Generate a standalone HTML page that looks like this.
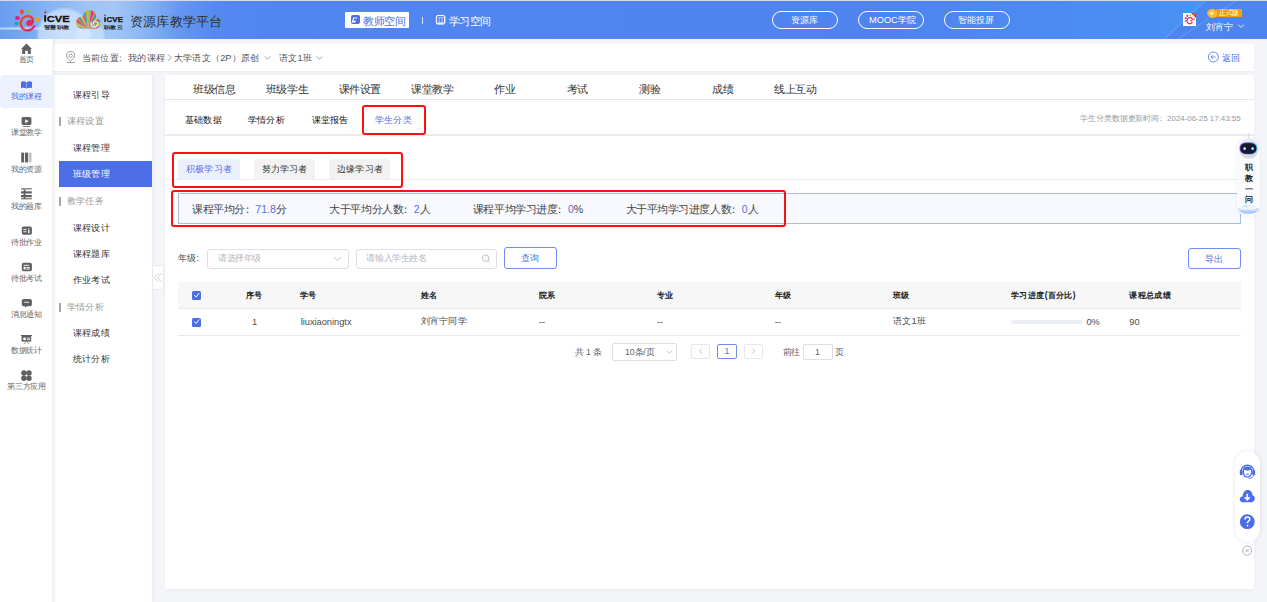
<!DOCTYPE html>
<html><head><meta charset="utf-8">
<style>
*{margin:0;padding:0;box-sizing:border-box}
html,body{width:1267px;height:602px;overflow:hidden}
body{position:relative;background:#f3f5f9;font-family:"Liberation Sans",sans-serif;color:#333}
.a{position:absolute;white-space:nowrap}
.t{position:absolute;white-space:nowrap;line-height:1}
/* header */
#hdr{left:0;top:0;width:1267px;height:39px;overflow:hidden;background:
radial-gradient(circle 28px at 64px 35px, rgba(225,238,253,.72) 0, rgba(225,238,253,.6) 88%, rgba(225,238,253,0) 100%),
radial-gradient(circle 16px at 90px 36px, rgba(222,236,253,.6) 0, rgba(222,236,253,.5) 80%, rgba(222,236,253,0) 100%),
radial-gradient(ellipse 55px 2px at 18px 28.5px, rgba(235,245,255,.75), rgba(235,245,255,0) 100%),
linear-gradient(90deg,#6a9cf0 0,#7dadf3 35px,#9fc4f6 90px,#a2c6f6 115px,#8cb8f4 140px,#7eadf3 155px,#6497f1 180px,#5589f0 215px,#5185f0 260px,#4f84ef 900px,#4d85ee 1267px)}
#topline{left:0;top:0;width:1267px;height:1px;background:#dcd8ea}
#nav{left:0;top:39px;width:53px;height:563px;background:#fff}
#crumb{left:53px;top:44px;width:1201px;height:27px;background:#fff;box-shadow:0 1px 2px rgba(0,0,0,.04)}
#side{left:53px;top:75px;width:99px;height:527px;background:#fff;box-shadow:1px 0 3px rgba(0,0,0,.05)}
#card{left:165px;top:75px;width:1089px;height:514px;background:#fff;box-shadow:0 1px 3px rgba(0,0,0,.06)}
.nl{font-size:7.92px;color:#666;left:0;width:53px;text-align:center;letter-spacing:-0.08px}
.si{font-size:9.24px;color:#333;left:73px;letter-spacing:0.24px}
.sg{font-size:9.24px;color:#999;left:67px;letter-spacing:0.24px}
.c{display:inline-block;width:1em;letter-spacing:0;text-indent:-0.28em;overflow:visible}
.L{letter-spacing:0}
.bar{position:absolute;left:59.3px;width:1.7px;height:9px;background:#a5a5a5}
.tab1{font-size:10.56px;color:#333;letter-spacing:-0.44px}
.tab2{font-size:9.24px;color:#111;font-weight:500;letter-spacing:0.24px}
.th{font-size:8.4px;color:#222;font-weight:bold;letter-spacing:0.4px}
.td{font-size:9.24px;color:#4a4a4a;letter-spacing:0.24px}
</style></head><body>
<div id="hdr" class="a"></div>

<svg class="a" style="left:0;top:0" width="1267" height="39" viewBox="0 0 1267 39">
<defs>
<clipPath id="shellclip">
<circle cx="82.3" cy="22.6" r="6.2"/><circle cx="89.6" cy="16.6" r="6.6"/><circle cx="95.9" cy="23.3" r="4.9"/><rect x="78" y="19" width="21" height="9.8" rx="4"/>
</clipPath>
<linearGradient id="eg" x1="0" y1="0" x2="1" y2="1"><stop offset="0" stop-color="#f04a1e"/><stop offset="1" stop-color="#e0206a"/></linearGradient>
</defs>
<!-- diagonal light stripes right -->
<linearGradient id="lg1" x1="0" y1="0" x2="1" y2="0"><stop offset="0" stop-color="rgb(70,155,248)" stop-opacity="0"/><stop offset="1" stop-color="rgb(70,155,248)" stop-opacity=".6"/></linearGradient><path d="M900,1 L1205.3,1 L1165,39 L900,39Z" fill="url(#lg1)"/>
<path d="M1204.5,1 L1206.5,1 L1165.6,39 L1163.6,39Z" fill="rgba(120,190,255,.35)"/>
<path d="M1235,1 L1236.5,1 L1178.5,39 L1177,39Z" fill="rgba(110,190,255,.55)"/>

<!-- flower logo -->
<ellipse cx="21.9" cy="11.8" rx="2" ry="2.5" fill="#f0493a" transform="rotate(-20 21.9 11.8)"/>
<ellipse cx="28.6" cy="11.3" rx="2" ry="2.1" fill="#8cc43c"/>
<ellipse cx="17.4" cy="17.9" rx="2.4" ry="1.9" fill="#e5188a"/>
<ellipse cx="16.6" cy="23.6" rx="2" ry="1.8" fill="#1aaa8c"/>
<ellipse cx="37.4" cy="19.3" rx="2.3" ry="2.3" fill="#f39c12"/>
<path d="M34.2,26.2 C32.5,29.8 28.5,31.2 25,30 C21.2,28.6 19.8,24 21.4,20.2 C23,16.6 27.6,15 31,17 C33.8,18.8 33.6,22.6 31.4,24.4" fill="none" stroke="url(#eg)" stroke-width="2.3" stroke-linecap="round"/><path d="M26.2,24.2 C25.6,21.6 28.2,19.2 30.8,19.8 C33.4,20.6 33.2,24 31,25.2 C29.2,26.2 26.8,25.8 26.2,24.2Z" fill="#e5285e"/>
<!-- iCVE 1 -->
<path d="M45.9,10.8 C46.9,11.4 46.6,13.2 45.2,13.6 C44.4,13.8 44,13.2 44.3,12.5 C44.6,11.8 45.2,11.2 45.9,10.8Z" fill="#e8282a"/><rect x="44.2" y="15.2" width="1.9" height="6.6" fill="#111"/><text x="46.8" y="21.8" font-family="Liberation Sans" font-weight="bold" font-size="9.2" fill="#111" stroke="#111" stroke-width="0.3" textLength="23" lengthAdjust="spacingAndGlyphs">CVE</text>
<text x="44" y="0" transform="translate(0,28.9) scale(1,0.75)" font-size="6.4" font-weight="bold" fill="#1a1a1a" textLength="26" lengthAdjust="spacingAndGlyphs">智慧职教</text>
<!-- shell logo -->
<g clip-path="url(#shellclip)"><path d="M88.5,29.5L66.50,29.50L66.72,26.37Z" fill="#f0437a"/>
<path d="M88.5,29.5L66.72,26.37L67.39,23.30Z" fill="#2bb3a0"/>
<path d="M88.5,29.5L67.39,23.30L68.49,20.36Z" fill="#f5a623"/>
<path d="M88.5,29.5L68.49,20.36L69.99,17.61Z" fill="#8cc63f"/>
<path d="M88.5,29.5L69.99,17.61L71.87,15.09Z" fill="#e8308a"/>
<path d="M88.5,29.5L71.87,15.09L74.09,12.87Z" fill="#f26b3a"/>
<path d="M88.5,29.5L74.09,12.87L76.61,10.99Z" fill="#19a7a0"/>
<path d="M88.5,29.5L76.61,10.99L79.36,9.49Z" fill="#f7b731"/>
<path d="M88.5,29.5L79.36,9.49L82.30,8.39Z" fill="#f0437a"/>
<path d="M88.5,29.5L82.30,8.39L85.37,7.72Z" fill="#2bb3a0"/>
<path d="M88.5,29.5L85.37,7.72L88.50,7.50Z" fill="#f5a623"/>
<path d="M88.5,29.5L88.50,7.50L91.63,7.72Z" fill="#8cc63f"/>
<path d="M88.5,29.5L91.63,7.72L94.70,8.39Z" fill="#e8308a"/>
<path d="M88.5,29.5L94.70,8.39L97.64,9.49Z" fill="#f26b3a"/>
<path d="M88.5,29.5L97.64,9.49L100.39,10.99Z" fill="#19a7a0"/>
<path d="M88.5,29.5L100.39,10.99L102.91,12.87Z" fill="#f7b731"/>
<path d="M88.5,29.5L102.91,12.87L105.13,15.09Z" fill="#f0437a"/>
<path d="M88.5,29.5L105.13,15.09L107.01,17.61Z" fill="#2bb3a0"/>
<path d="M88.5,29.5L107.01,17.61L108.51,20.36Z" fill="#f5a623"/>
<path d="M88.5,29.5L108.51,20.36L109.61,23.30Z" fill="#8cc63f"/>
<path d="M88.5,29.5L109.61,23.30L110.28,26.37Z" fill="#e8308a"/>
<path d="M88.5,29.5L110.28,26.37L110.50,29.50Z" fill="#f26b3a"/></g>
<path d="M93.8,24.8 C92.6,22.6 94.8,20.6 96.8,21.8 C98.8,23.2 97.8,26.6 95.2,27 C92.2,27.4 90.2,24.6 91.2,21.6" fill="none" stroke="rgba(235,245,255,.9)" stroke-width="1.3"/>
<!-- iCVE 2 -->
<circle cx="105" cy="15.4" r="0.95" fill="#e8282a"/><rect x="104.3" y="17.2" width="1.5" height="4.8" fill="#111"/><text x="106.6" y="21.9" font-family="Liberation Sans" font-weight="bold" font-size="7" fill="#111" stroke="#111" stroke-width="0.25" textLength="16.4" lengthAdjust="spacingAndGlyphs">CVE</text>
<text x="104" y="0" transform="translate(0,28.9) scale(1,0.8)" font-size="6.4" font-weight="bold" fill="#1a1a1a" textLength="19" lengthAdjust="spacingAndGlyphs">职教云</text>
</svg>
<div id="nav" class="a"></div>
<div id="crumb" class="a"></div>
<div id="side" class="a"></div>
<div id="card" class="a"></div>
<div class="a" style="left:52px;top:39px;width:5px;height:563px;background:linear-gradient(90deg,rgba(0,0,0,.015),rgba(0,0,0,.05) 30%,rgba(0,0,0,.02) 60%,rgba(0,0,0,0))"></div>

<!-- header content -->
<div class="t" style="left:130px;top:15px;font-size:13.2px;color:#2c2c2c;letter-spacing:0.2px">资源库教学平台</div>
<div class="a" style="left:344.5px;top:12px;width:64px;height:16px;background:#fff;border-radius:1px"></div>
<div class="a" style="left:351px;top:15.3px;width:9px;height:8.6px;background:#4c6ee6;border-radius:2px"></div>
<div class="t" style="left:363px;top:16px;font-size:10.56px;color:#4c6ee6;letter-spacing:-0.44px">教师空间</div>
<div class="a" style="left:422px;top:17px;width:1px;height:6.5px;background:rgba(255,255,255,.8)"></div>
<div class="a" style="left:436px;top:15.3px;width:9px;height:8.6px;border:1px solid rgba(255,255,255,.9);border-radius:2px"></div>
<div class="t" style="left:448.5px;top:16px;font-size:10.56px;color:#fff;letter-spacing:-0.44px">学习空间</div>

<div class="a" style="left:772px;top:11px;width:66px;height:17.5px;border:1px solid #fff;border-radius:9px"></div>
<div class="t" style="left:791px;top:15.5px;font-size:9.24px;color:#fff;letter-spacing:0;font-weight:500">资源库</div>
<div class="a" style="left:858px;top:11px;width:66px;height:17.5px;border:1px solid #fff;border-radius:9px"></div>
<div class="t" style="left:869px;top:15.5px;font-size:9.24px;color:#fff;letter-spacing:0;font-weight:500"><span class="L">MOOC</span>学院</div>
<div class="a" style="left:943.5px;top:11px;width:66px;height:17.5px;border:1px solid #fff;border-radius:9px"></div>
<div class="t" style="left:958px;top:15.5px;font-size:9.24px;color:#fff;letter-spacing:0;font-weight:500">智能投屏</div>

<div class="a" style="left:1183px;top:13px;width:13.3px;height:13px;background:#fff"></div>
<div class="a" style="left:1215.5px;top:9.3px;width:26px;height:8.2px;background:#f5a000;border-radius:1px"></div>
<div class="a" style="left:1207.5px;top:9px;width:9px;height:9px;background:#f7c13b;border-radius:50%"></div>
<div class="t" style="left:1219px;top:10px;font-size:6.6px;color:#fff;letter-spacing:-0.4px">正式版</div>
<div class="t" style="left:1206px;top:23px;font-size:9.24px;color:#fff;letter-spacing:0.24px">刘宵宁</div>


<div class="a" style="left:0;top:75px;width:53px;height:33px;background:#edf1fd;border-radius:4px 0 0 4px"></div>
<div id="topline" class="a"></div>
<!-- nav icons -->
<svg class="a" style="left:0;top:39px" width="53" height="350" viewBox="0 39 53 350">
<g fill="#606060">
<!-- house -->
<path d="M26.5,43.5 L32,49 L30.8,49 L30.8,54 L27.8,54 L27.8,50.8 L25.2,50.8 L25.2,54 L22.2,54 L22.2,49 L21,49Z"/>
<!-- play -->
<rect x="21.6" y="116.9" width="9.8" height="8.2" rx="1.6"/>
<rect x="23" y="126" width="7" height="0.8"/>
<!-- resources -->
<rect x="21.2" y="152.6" width="2.9" height="9.8"/>
<rect x="25" y="152.6" width="3" height="9.8"/>
<rect x="28.7" y="152.6" width="0.9" height="9.8" fill="#9a9a9a"/>
<rect x="30.4" y="152.6" width="0.9" height="9.8" fill="#9a9a9a"/>
<!-- question bank -->
<rect x="21" y="188.3" width="10.8" height="1.1"/>
<rect x="21" y="191.3" width="10.8" height="2.2"/>
<rect x="21" y="195" width="10.8" height="2.2"/>
<rect x="21" y="198.2" width="10.8" height="1.1"/>
<rect x="23.6" y="189.5" width="1.9" height="9" />
<!-- homework -->
<rect x="21.8" y="226.6" width="10.1" height="8.2" rx="1.8"/>
<!-- exam -->
<rect x="21.8" y="262.8" width="10.1" height="8.4" rx="1.8"/>
<!-- message -->
<path d="M23.6,299 h6.5 a1.8,1.8 0 0 1 1.8,1.8 v3.6 a1.8,1.8 0 0 1 -1.8,1.8 h-3.3 l-1.3,1.2 l-0.7,-1.2 h-1.2 a1.8,1.8 0 0 1 -1.8,-1.8 v-3.6 a1.8,1.8 0 0 1 1.8,-1.8Z"/>
<!-- stats board -->
<rect x="20.9" y="335" width="11" height="1"/>
<rect x="21.6" y="336" width="9.6" height="5.6"/>
<path d="M26,341.5 L23.5,344 L24.2,344 L26.4,341.8Z M27,341.5 L29.4,344 L28.7,344 L26.6,341.8Z"/>
<!-- apps -->
<circle cx="23.9" cy="373" r="2.7"/><circle cx="29" cy="373" r="2.7"/><circle cx="23.9" cy="378.2" r="2.7"/><circle cx="29" cy="378.2" r="2.7"/>
</g>
<!-- book (active) -->
<path d="M21,82 C22.5,81 24.5,81 26.3,82.2 L26.3,88.6 C24.5,87.6 22.5,87.6 21,88.2Z M26.7,82.2 C28.5,81 30.5,81 32,82 L32,88.2 C30.5,87.6 28.5,87.6 26.7,88.6Z" fill="#4c6ee6"/>
<path d="M27.5,119.3 L27.5,123.3 L31,121.3Z" fill="#fff" transform="translate(-2.3,0)"/>
<g fill="#fff">
<rect x="23.3" y="229" width="3.2" height="0.9"/><rect x="23.3" y="231.3" width="3.2" height="0.9"/><rect x="28.2" y="228.4" width="1.3" height="1"/><rect x="28.2" y="230" width="1.3" height="3.2"/>
<rect x="23.6" y="264.8" width="5.5" height="0.9"/><rect x="23.6" y="266.8" width="2" height="2.6"/><rect x="26.3" y="267" width="3.6" height="0.9"/><rect x="26.3" y="268.6" width="3.6" height="0.9"/>
<rect x="24.3" y="301.8" width="4.8" height="0.9"/>
<rect x="23.2" y="337.6" width="2.6" height="2.6" rx="1"/><rect x="26.8" y="337.7" width="3.3" height="0.8"/><rect x="26.8" y="339.3" width="3.3" height="0.8"/>
</g>
</svg>
<!-- nav labels -->
<div class="t nl" style="top:56px">首页</div>
<div class="t nl" style="top:93px;color:#4c6ee6">我的课程</div>
<div class="t nl" style="top:129px">课堂教学</div>
<div class="t nl" style="top:166px">我的资源</div>
<div class="t nl" style="top:202.5px">我的题库</div>
<div class="t nl" style="top:238.5px">待批作业</div>
<div class="t nl" style="top:275px">待批考试</div>
<div class="t nl" style="top:311px">消息通知</div>
<div class="t nl" style="top:347px">数据统计</div>
<div class="t nl" style="top:383px">第三方应用</div>

<!-- breadcrumb -->
<svg class="a" style="left:60px;top:46px" width="270" height="22" viewBox="60 46 270 22">
<g fill="none" stroke="#8a8a8a" stroke-width="0.85">
<path d="M70.6,61.2 C68.5,59.2 66.5,57.5 66.5,55.6 A4.1,4.1 0 0 1 74.7,55.6 C74.7,57.5 72.7,59.2 70.6,61.2Z"/>
<circle cx="70.6" cy="55.7" r="1.7"/>
<path d="M66.8,62.5 H74.8"/>
</g>
<g fill="none" stroke="#777" stroke-width="0.7">
<path d="M168,54.4 L171.2,57.8 L168,61.2"/>
<path d="M264.5,56.3 L267.5,59.2 L270.5,56.3"/>
<path d="M316.4,56.3 L319.4,59.2 L322.4,56.3"/>
</g>
</svg>
<div class="t" style="left:82px;top:54px;font-size:9.24px;color:#555;letter-spacing:0.24px">当前位置<span class="c">：</span>我的课程</div>
<div class="t" style="left:174px;top:54px;font-size:9.24px;color:#555;letter-spacing:0.24px">大学语文（<span class="L">2P</span>）原创</div>
<div class="t" style="left:279px;top:54px;font-size:9.24px;color:#555;letter-spacing:0.24px">语文<span class="L">1</span>班</div>
<svg class="a" style="left:1206px;top:50px" width="14" height="14" viewBox="1206 50 14 14">
<circle cx="1213.4" cy="57" r="5" fill="none" stroke="#4c6ee6" stroke-width="0.8"/>
<path d="M1215.6,57 H1211 M1212.8,55.2 L1211,57 L1212.8,58.8" fill="none" stroke="#4c6ee6" stroke-width="0.8"/>
</svg>
<div class="t" style="left:1222px;top:54px;font-size:9.24px;color:#4c6ee6;letter-spacing:0.24px">返回</div>
<!-- side menu -->
<div class="t si" style="top:90.5px">课程引导</div>
<div class="bar" style="top:117px"></div>
<div class="t sg" style="top:117px">课程设置</div>
<div class="t si" style="top:143.5px">课程管理</div>
<div class="a" style="left:59px;top:161px;width:93px;height:26px;background:#4c6ee6"></div>
<div class="t si" style="top:170px;color:#fff">班级管理</div>
<div class="bar" style="top:197px"></div>
<div class="t sg" style="top:197px">教学任务</div>
<div class="t si" style="top:223.5px">课程设计</div>
<div class="t si" style="top:249.5px">课程题库</div>
<div class="t si" style="top:275.5px">作业考试</div>
<div class="bar" style="top:302.5px"></div>
<div class="t sg" style="top:302.5px">学情分析</div>
<div class="t si" style="top:329px">课程成绩</div>
<div class="t si" style="top:355px">统计分析</div>


<!-- card content -->
<div class="a" style="left:165px;top:99px;width:1089px;height:1px;background:#e4e8f0"></div>
<div class="t tab1" style="left:193.3px;top:83.5px">班级信息</div>
<div class="t tab1" style="left:265.9px;top:83.5px">班级学生</div>
<div class="t tab1" style="left:338.5px;top:83.5px">课件设置</div>
<div class="t tab1" style="left:411.1px;top:83.5px">课堂教学</div>
<div class="t tab1" style="left:494.1px;top:83.5px">作业</div>
<div class="t tab1" style="left:566.8px;top:83.5px">考试</div>
<div class="t tab1" style="left:639.4px;top:83.5px">测验</div>
<div class="t tab1" style="left:712px;top:83.5px">成绩</div>
<div class="t tab1" style="left:774px;top:83.5px">线上互动</div>

<div class="t tab2" style="left:184.9px;top:115.5px">基础数据</div>
<div class="t tab2" style="left:248px;top:115.5px">学情分析</div>
<div class="t tab2" style="left:311.7px;top:115.5px">课堂报告</div>
<div class="t tab2" style="left:374.8px;top:115.5px;color:#4c6ee6;font-weight:normal">学生分类</div>
<div class="t" style="left:1080px;top:114.5px;font-size:7.92px;color:#999;letter-spacing:-0.08px">学生分类数据更新时间<span class="c">：</span><span class="L">2024-06-25 17:43:55</span></div>
<div class="a" style="left:165px;top:134px;width:1089px;height:1.5px;background:#e9ebf0"></div>

<!-- learner tabs -->
<div class="a" style="left:165px;top:179px;width:1089px;height:1px;background:#eceef2"></div>
<div class="a" style="left:178px;top:159px;width:62px;height:20.3px;background:#ecf0fd;border-radius:3px 3px 0 0"></div>
<div class="t" style="left:186px;top:165px;font-size:9.24px;color:#5b6ee6;letter-spacing:0.24px">积极学习者</div>
<div class="a" style="left:253.6px;top:159px;width:61.4px;height:20.3px;background:#f2f2f2;border-radius:3px 3px 0 0"></div>
<div class="t" style="left:261.5px;top:165px;font-size:9.24px;color:#333;letter-spacing:0.24px">努力学习者</div>
<div class="a" style="left:329px;top:159px;width:61.3px;height:20.3px;background:#f2f2f2;border-radius:3px 3px 0 0"></div>
<div class="t" style="left:337px;top:165px;font-size:9.24px;color:#333;letter-spacing:0.24px">边缘学习者</div>

<!-- stats -->
<div class="a" style="left:178px;top:193.3px;width:1062.7px;height:30.3px;background:#f8f9fe;border:1px solid #a9bbf3"></div>
<div class="t" style="left:192px;top:204px;font-size:10.56px;color:#444;letter-spacing:-0.44px">课程平均分<span class="c">：</span><span class="L" style="color:#5b6ee6">71.8</span>分</div>
<div class="t" style="left:329.3px;top:204px;font-size:10.56px;color:#444;letter-spacing:-0.44px">大于平均分人数<span class="c">：</span><span class="L" style="color:#5b6ee6">2</span>人</div>
<div class="t" style="left:472.9px;top:204px;font-size:10.56px;color:#444;letter-spacing:-0.44px">课程平均学习进度<span class="c">：</span><span class="L" style="color:#5b6ee6">0</span><span class="L">%</span></div>
<div class="t" style="left:625.5px;top:204px;font-size:10.56px;color:#444;letter-spacing:-0.44px">大于平均学习进度人数<span class="c">：</span><span class="L" style="color:#5b6ee6">0</span>人</div>

<!-- red boxes -->
<div class="a" style="left:362px;top:104.5px;width:63.5px;height:30px;border:2.5px solid #fb1111;border-radius:3px"></div>
<div class="a" style="left:172px;top:152.4px;width:230.6px;height:35.2px;border:2.5px solid #fb1111;border-radius:3px"></div>
<div class="a" style="left:170.7px;top:189.6px;width:615.6px;height:37.6px;border:2.5px solid #fb1111;border-radius:3px"></div>

<!-- filters -->
<div class="t" style="left:178px;top:253.8px;font-size:9.24px;color:#444;letter-spacing:0.24px">年级<span class="L">:</span></div>
<div class="a" style="left:207.4px;top:248.6px;width:141.2px;height:20.7px;border:1px solid #dfdfe2;border-radius:3px"></div>
<div class="t" style="left:218px;top:254px;font-size:8.58px;color:#b5b8bf;letter-spacing:-0.42px">请选择年级</div>
<div class="a" style="left:355.7px;top:248.6px;width:141.7px;height:20.7px;border:1px solid #dfdfe2;border-radius:3px"></div>
<div class="t" style="left:366.4px;top:254px;font-size:8.58px;color:#b5b8bf;letter-spacing:-0.42px">请输入学生姓名</div>
<div class="a" style="left:504.3px;top:247.4px;width:52.6px;height:21.5px;border:1px solid #6f8cf0;border-radius:3px"></div>
<div class="t" style="left:521px;top:254.3px;font-size:9.24px;color:#4c6ee6;letter-spacing:0.24px">查询</div>
<div class="a" style="left:1187.9px;top:248.1px;width:52.8px;height:21.2px;border:1px solid #6f8cf0;border-radius:3px"></div>
<div class="t" style="left:1205px;top:254.8px;font-size:9.24px;color:#4c6ee6;letter-spacing:0.24px">导出</div>

<!-- table -->
<div class="a" style="left:178px;top:282px;width:1062.7px;height:26.5px;background:#f7f7f8;border-bottom:1px solid #e8e8e8"></div>
<div class="a" style="left:178px;top:334.6px;width:1062.7px;height:1px;background:#e9e9e9"></div>
<div class="t th" style="left:245.7px;top:290.5px">序号</div>
<div class="t th" style="left:300px;top:290.5px">学号</div>
<div class="t th" style="left:420.7px;top:290.5px">姓名</div>
<div class="t th" style="left:538.9px;top:290.5px">院系</div>
<div class="t th" style="left:657px;top:290.5px">专业</div>
<div class="t th" style="left:774.7px;top:290.5px">年级</div>
<div class="t th" style="left:893.1px;top:290.5px">班级</div>
<div class="t th" style="left:1011.1px;top:290.5px">学习进度<span class="L">(</span>百分比<span class="L">)</span></div>
<div class="t th" style="left:1129.3px;top:290.5px">课程总成绩</div>
<div class="a" style="left:192px;top:290.5px;width:9px;height:9px;background:#4c6ee6;border-radius:1.5px"></div>
<div class="a" style="left:192px;top:317.6px;width:9px;height:9px;background:#4c6ee6;border-radius:1.5px"></div>
<div class="t td" style="left:252px;top:317.6px;letter-spacing:0">1</div>
<div class="t td" style="left:300.7px;top:317.6px;letter-spacing:0">liuxiaoningtx</div>
<div class="t td" style="left:420.7px;top:317px">刘宵宁同学</div>
<div class="t td" style="left:538.9px;top:317.6px;letter-spacing:0">--</div>
<div class="t td" style="left:657px;top:317.6px;letter-spacing:0">--</div>
<div class="t td" style="left:774.7px;top:317.6px;letter-spacing:0">--</div>
<div class="t td" style="left:893.1px;top:317px">语文<span class="L">1</span>班</div>
<div class="a" style="left:1011.1px;top:320.3px;width:71.8px;height:3.7px;background:#ebeef5;border-radius:2px"></div>
<div class="t td" style="left:1086.4px;top:318px;letter-spacing:0">0%</div>
<div class="t td" style="left:1129.3px;top:317.6px;letter-spacing:0">90</div>

<!-- pagination -->
<div class="t" style="left:575px;top:347.5px;font-size:8.58px;color:#606266;letter-spacing:-0.42px">共<span class="L"> 1 </span>条</div>
<div class="a" style="left:611.7px;top:343.1px;width:65.7px;height:18.3px;border:1px solid #dfdfe2;border-radius:2px"></div>
<div class="t" style="left:625px;top:347.5px;font-size:8.58px;color:#606266;letter-spacing:-0.42px"><span class="L">10</span>条<span class="L">/</span>页</div>
<div class="a" style="left:691.1px;top:343.6px;width:19.2px;height:15px;border:1px solid #e4e7ed;border-radius:2px"></div>
<div class="a" style="left:717.1px;top:343.6px;width:19.8px;height:15px;border:1px solid #6f8cf0;border-radius:2px"></div>
<div class="t" style="left:724.5px;top:347px;font-size:8.58px;color:#4c6ee6;letter-spacing:0px">1</div>
<div class="a" style="left:744.3px;top:343.6px;width:19px;height:15px;border:1px solid #e4e7ed;border-radius:2px"></div>
<div class="t" style="left:782.6px;top:347.5px;font-size:8.58px;color:#606266;letter-spacing:-0.42px">前往</div>
<div class="a" style="left:802.9px;top:343.6px;width:29.7px;height:16px;border:1px solid #dfdfe2;border-radius:2px"></div>
<div class="t" style="left:815px;top:347.5px;font-size:8.58px;color:#606266;letter-spacing:0px">1</div>
<div class="t" style="left:835.4px;top:347.5px;font-size:8.58px;color:#606266;letter-spacing:-0.42px">页</div>

<!-- collapse handle -->
<div class="a" style="left:152.3px;top:265px;width:11.8px;height:24.5px;background:#fff;border:1px solid #e8e9ee;border-radius:2.5px"></div>

<!-- robot widget -->
<div class="a" style="left:1236.8px;top:137px;width:23px;height:80px;background:#fbfbfe;border-radius:11.5px;box-shadow:0 0 2px rgba(80,90,140,.18)"></div>
<!-- float bar -->
<div class="a" style="left:1234.9px;top:451.2px;width:25.1px;height:90.7px;background:#fff;border-radius:12.5px;box-shadow:0 0 4px rgba(0,0,0,.1)"></div>

<!-- misc icons -->
<svg class="a" style="left:0;top:0" width="1267" height="602" viewBox="0 0 1267 602">
<!-- header icons -->
<g fill="#fff" stroke="none">
<path d="M353.2,17.6 h4 v1 h-3 l-1,2.2 h2.8 l-0.8,1.6 h-3.6Z" fill="#fff"/>
</g>
<rect x="436.3" y="15.4" width="8.8" height="9" rx="1.8" fill="none" stroke="rgba(255,255,255,.85)" stroke-width="0.8"/>
<path d="M438.6,17.6 h4.2 M439.2,17.6 v4.4 M442.2,17.6 v4.4 M438.2,22.4 h5" stroke="rgba(255,255,255,.85)" stroke-width="0.7" fill="none"/>
<!-- user chevron -->
<path d="M1238.3,24.6 L1241,27.5 L1243.8,24.6" fill="none" stroke="#fff" stroke-width="0.8"/>
<!-- avatar flower -->
<g transform="translate(1183.2,13.2) scale(0.42)">
<ellipse cx="10" cy="6" rx="2.4" ry="2.8" fill="#f0493a"/>
<ellipse cx="17" cy="5.5" rx="2.2" ry="2.2" fill="#8cc43c"/>
<ellipse cx="6" cy="12" rx="2.6" ry="2.1" fill="#e5188a"/>
<ellipse cx="5.5" cy="18" rx="2.2" ry="2" fill="#1aaa8c"/>
<ellipse cx="26" cy="14" rx="2.5" ry="2.5" fill="#f39c12"/>
<path d="M22,21 C20,25 15,26 12,24 C8,22 8,16 11,13 C14,10 19,10 21,13 C23,16 20,19 17,18" fill="none" stroke="#e5285e" stroke-width="3"/>
</g>
<path d="M1190.8,13 h5.5 v5.2Z" fill="#e02a4a"/>
<path d="M1193.8,14.2 l0.6,0.6 l0.9,-1" stroke="#fff" stroke-width="0.5" fill="none"/>
<!-- badge medal -->
<path d="M1211.7,8.6 l1.2,1.1 l1.6,-0.2 l0.5,1.5 l1.4,0.8 l-0.5,1.5 l0.5,1.5 l-1.4,0.8 l-0.5,1.5 l-1.6,-0.2 l-1.2,1.1 l-1.2,-1.1 l-1.6,0.2 l-0.5,-1.5 l-1.4,-0.8 l0.5,-1.5 l-0.5,-1.5 l1.4,-0.8 l0.5,-1.5 l1.6,0.2Z" fill="#f5b930"/>
<circle cx="1211.7" cy="13.3" r="2.3" fill="#fbd568"/>
<path d="M1211.7,12 l0.4,0.9 l1,0.1 l-0.75,0.65 l0.25,1 l-0.9,-0.55 l-0.9,0.55 l0.25,-1 l-0.75,-0.65 l1,-0.1Z" fill="#fff"/>
<path d="M1209.6,17.6 l-0.9,1.4 h2 Z M1213.8,17.6 l0.9,1.4 h-2Z" fill="#2a7de0"/>

<!-- select chevrons -->
<path d="M334.2,257.2 L337.6,260.4 L341,257.2" fill="none" stroke="#b0b3ba" stroke-width="0.8"/>
<circle cx="485.6" cy="258.2" r="3.3" fill="none" stroke="#b0b3ba" stroke-width="0.8"/>
<path d="M488,260.6 L489.8,262.3" stroke="#b0b3ba" stroke-width="0.8"/>
<!-- checks -->
<path d="M194.2,295 L196.2,297 L199.2,293" fill="none" stroke="#fff" stroke-width="1"/>
<path d="M194.2,321.5 L196.2,323.5 L199.2,319.5" fill="none" stroke="#fff" stroke-width="1"/>
<!-- pagination -->
<path d="M667,351 L669.5,353.3 L672,351" fill="none" stroke="#b0b3ba" stroke-width="0.7"/>
<path d="M702,348.4 L699.4,351 L702,353.6" fill="none" stroke="#b8bbc2" stroke-width="0.8"/>
<path d="M752.4,348.4 L755,351 L752.4,353.6" fill="none" stroke="#b8bbc2" stroke-width="0.8"/>
<!-- collapse handle chevrons -->
<path d="M158.2,273.3 L154.4,277.5 L158.2,281.7 M161.4,273.3 L157.6,277.5 L161.4,281.7" fill="none" stroke="#b4b6bc" stroke-width="0.6"/>

<!-- float icons -->
<g fill="#4a6ee8">
<!-- headset -->
<path d="M1240.4,472.4 C1240.4,467.6 1243.4,464.6 1247.4,464.6 C1251.4,464.6 1254.4,467.6 1254.4,472.4 L1253.2,472.4 C1253.2,468.4 1250.8,465.9 1247.4,465.9 C1244,465.9 1241.6,468.4 1241.6,472.4Z"/>
<rect x="1239.8" y="469.8" width="2.8" height="5.4" rx="1.3"/>
<rect x="1252.2" y="469.8" width="2.8" height="5.4" rx="1.3"/>
<path d="M1242.6,471 C1242.6,467.8 1244.6,466.4 1247.4,466.4 C1250.2,466.4 1252.2,467.8 1252.2,471 L1252.2,473 C1251.4,476.6 1249.6,477.6 1247.4,477.6 C1245.2,477.6 1243.4,476.6 1242.6,473Z"/>
<!-- cloud -->
<path d="M1242.8,502.2 C1240.6,502.2 1239.8,500.6 1239.8,499.2 C1239.8,497.5 1241,496.4 1242.6,496.4 C1242.8,492.6 1245.2,490 1247.6,490 C1250.6,490 1252.4,492.4 1252.6,495.4 C1254,495.6 1254.8,496.9 1254.8,498.6 C1254.8,500.6 1253.4,502.2 1251.6,502.2Z"/>
<!-- question -->
<circle cx="1247.3" cy="521.7" r="7.4"/>
</g>
<path d="M1245,519.6 C1245,517.9 1246,517.1 1247.4,517.1 C1248.9,517.1 1249.8,518 1249.8,519.2 C1249.8,520.7 1248,521 1247.5,522.4 L1247.5,523.3" fill="none" stroke="#fff" stroke-width="1.5"/>
<circle cx="1247.5" cy="525.6" r="0.9" fill="#fff"/>
<path d="M1244,469.4 C1245.6,470.6 1248.6,470.8 1251,469.8 L1251,472.6 C1250.6,475.2 1249.2,476.4 1247.5,476.4 C1245.8,476.4 1244.4,475.2 1244,472.6Z" fill="#fff"/>
<path d="M1253.6,475 C1253.4,477.2 1251.6,478.4 1248.6,478.4" fill="none" stroke="#4a6ee8" stroke-width="0.9"/>
<rect x="1246.2" y="473.6" width="2.6" height="1.2" rx="0.6" fill="#4a6ee8"/>
<path d="M1247.3,493.8 V499.6 M1244.8,497.2 L1247.3,499.8 L1249.8,497.2" fill="none" stroke="#fff" stroke-width="1.6"/>
<circle cx="1247.2" cy="550.6" r="4.6" fill="none" stroke="#9ea1a8" stroke-width="0.8"/>
<path d="M1245.6,549 L1248.8,552.2 M1248.8,549 L1245.6,552.2" stroke="#9ea1a8" stroke-width="0.8"/>

<!-- robot -->
<defs>
<radialGradient id="head" cx="0.4" cy="0.3" r="0.8"><stop offset="0" stop-color="#f4f5f8"/><stop offset="1" stop-color="#cfd3dc"/></radialGradient>
<linearGradient id="visor" x1="0" y1="0" x2="1" y2="0"><stop offset="0" stop-color="#8a4cd8"/><stop offset="0.5" stop-color="#2a3a8a"/><stop offset="1" stop-color="#3cc0f0"/></linearGradient>
<linearGradient id="wave" x1="0" y1="0" x2="1" y2="0"><stop offset="0" stop-color="#7fc8f8"/><stop offset="1" stop-color="#b89cf0"/></linearGradient>
</defs>
<path d="M1248.6,135 V139" stroke="#ccc" stroke-width="0.6"/>
<circle cx="1248.6" cy="134" r="1" fill="#ddd"/>
<circle cx="1248.8" cy="148.6" r="10" fill="url(#head)"/>
<rect x="1239.6" y="142.6" width="17.6" height="11.6" rx="5.6" fill="url(#visor)"/>
<rect x="1240.4" y="143.4" width="16" height="10" rx="5" fill="#141a33"/>
<ellipse cx="1244.6" cy="148.4" rx="1.2" ry="1.5" fill="#dff4ff"/>
<ellipse cx="1252.6" cy="148.4" rx="1.2" ry="1.5" fill="#dff4ff"/>
<ellipse cx="1248.6" cy="209.5" rx="10.5" ry="4.2" fill="#a8d0fa" opacity="0.6"/>
<path d="M1238.5,207.5 C1241.5,205 1245,208.5 1248.6,206.5 C1252.2,204.5 1255.6,208 1258.8,206 C1257.6,209 1254,210 1248.6,209.6 C1243.2,210 1239.8,209.5 1238.5,207.5Z" fill="#ffffff" opacity="0.7"/>
<path d="M1240,211 C1243,209.6 1246,212 1248.6,210.8 C1251.2,209.6 1254.4,212 1257.4,210.6 C1256,213.4 1252,214.2 1248.6,214 C1245,214.2 1241.4,213.4 1240,211Z" fill="#9db6f5" opacity="0.6"/>
</svg>
<div class="a" style="left:1244.2px;top:163px;width:9px;font-size:7.8px;line-height:10.8px;font-weight:bold;color:#222;text-align:center;white-space:normal">职教一问</div>
</body></html>
